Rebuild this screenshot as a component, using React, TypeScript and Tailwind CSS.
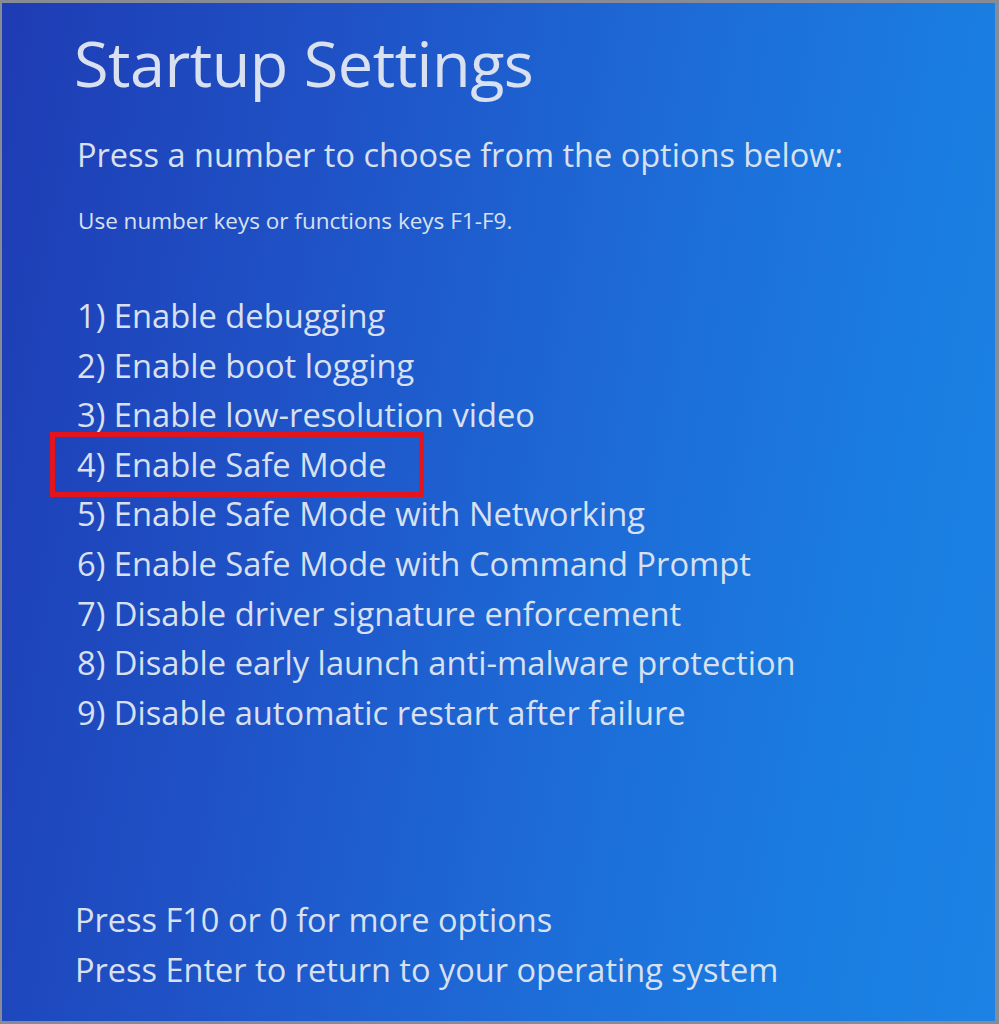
import React from 'react';

const options = [
  '1) Enable debugging',
  '2) Enable boot logging',
  '3) Enable low-resolution video',
  '4) Enable Safe Mode',
  '5) Enable Safe Mode with Networking',
  '6) Enable Safe Mode with Command Prompt',
  '7) Disable driver signature enforcement',
  '8) Disable early launch anti-malware protection',
  '9) Disable automatic restart after failure',
];

export default function App() {
  return (
    <div className="w-[999px] h-[1024px] bg-[#868b95] pt-[3px] pl-[2px] pr-[4px] pb-[3px]">
      <div
        className="w-full h-full flex flex-col text-[#d9e0ef] bg-[linear-gradient(100deg,#1e3cb4_0%,#1f52c6_30%,#1d6cd8_60%,#1a7ee1_85%,#1c82e4_100%)]"
        style={{ fontFamily: '"Open Sans", "Noto Sans", sans-serif' }}
      >
        <h1 className="pl-[72px] pt-[20px] text-[63px] leading-[80px] font-normal tracking-[-0.5px]">
          Startup Settings
        </h1>
        <p className="pl-[75px] mt-[32px] text-[32.5px] leading-[40px] whitespace-nowrap">
          Press a number to choose from the options below:
        </p>
        <p className="pl-[76px] mt-[33px] text-[22.5px] leading-[26px] whitespace-nowrap">
          Use number keys or functions keys F1-F9.
        </p>
        <ul className="pl-[75px] mt-[57px] flex flex-col">
          {options.map((o, i) => (
            <li key={o} className="relative text-[32.7px] leading-[49.6px] whitespace-nowrap">
              {i === 3 && (
                <span className="absolute left-[-27px] top-[-8px] w-[374px] h-[65px] border-[5px] border-[#e3141c]" />
              )}
              {o}
            </li>
          ))}
        </ul>
        <div className="mt-auto pl-[73px] pb-[26px] flex flex-col text-[32.5px] leading-[50px] whitespace-nowrap">
          <span>Press F10 or 0 for more options</span>
          <span>Press Enter to return to your operating system</span>
        </div>
      </div>
    </div>
  );
}
